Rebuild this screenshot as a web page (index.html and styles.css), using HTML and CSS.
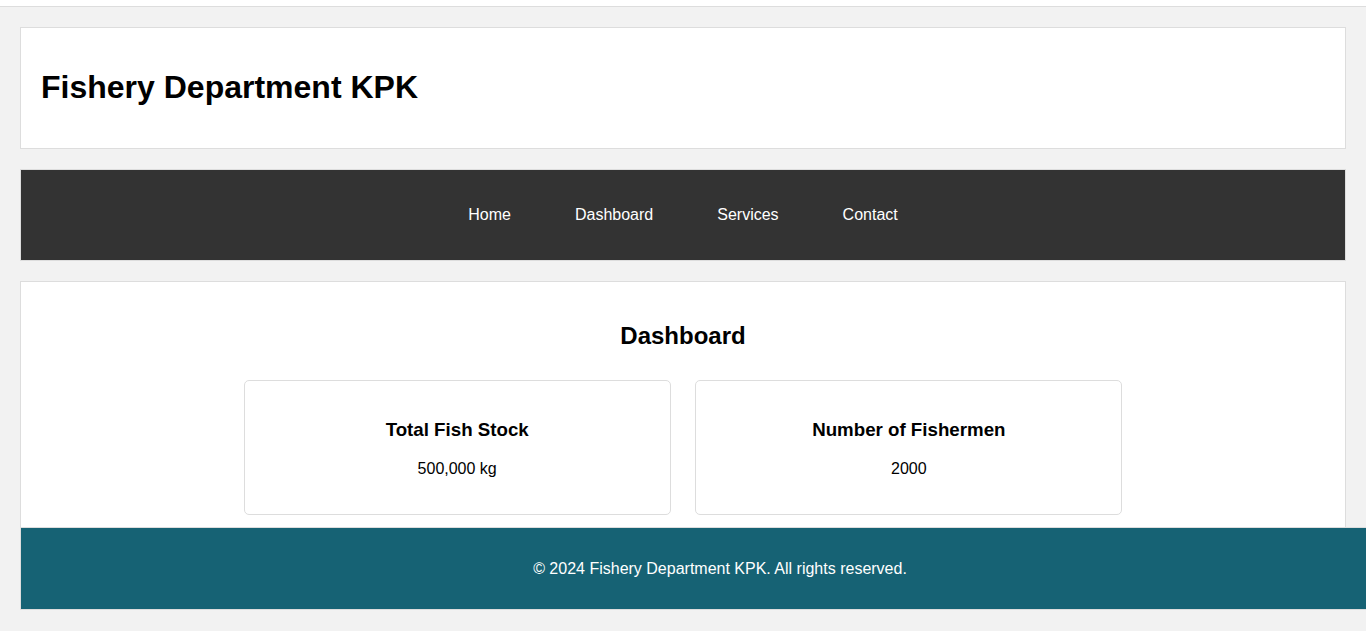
FILE: index.html
```html
<!DOCTYPE html>
<html lang="en">
<head>
<meta charset="utf-8">
<title>Fishery Department KPK</title>
<link rel="stylesheet" href="styles.css">
</head>
<body>
<header class="site-header">
  <h1>Fishery Department KPK</h1>
</header>
<nav class="site-nav">
  <ul>
    <li><a href="#">Home</a></li>
    <li><a href="#">Dashboard</a></li>
    <li><a href="#">Services</a></li>
    <li><a href="#">Contact</a></li>
  </ul>
</nav>
<main class="dashboard">
  <h2>Dashboard</h2>
  <div class="cards"><div class="card">
      <h3>Total Fish Stock</h3>
      <p>500,000 kg</p>
    </div> <div class="card">
      <h3>Number of Fishermen</h3>
      <p>2000</p>
    </div></div>
</main>
<footer class="site-footer">© 2024 Fishery Department KPK. All rights reserved.</footer>
</body>
</html>
```
FILE: styles.css
```css
html {
  background: #ffffff;
}
body {
  margin: 6px 0 0 0;
  padding: 20px;
  min-height: calc(100vh - 7px);
  box-sizing: border-box;
  border-top: 1px solid #dddddd;
  background: #f2f2f2;
  font-family: "Liberation Sans", Arial, sans-serif;
  font-size: 16px;
  color: #000;
}
.site-header {
  background: #fff;
  border: 1px solid #dddddd;
  padding: 0 20px;
  margin-bottom: 20px;
}
.site-header h1 {
  font-size: 32px;
  margin: 41px 0 42px;
  line-height: 37px;
}
.site-nav {
  background: #333333;
  border: 1px solid #dddddd;
  padding: 20px;
  margin-bottom: 20px;
}
.site-nav ul {
  list-style: none;
  margin: 16px 0;
  padding: 0;
  display: flex;
  justify-content: center;
  gap: 64px;
  line-height: 18px;
}
.site-nav a {
  color: #ffffff;
  text-decoration: none;
}
.dashboard {
  background: #fff;
  border: 1px solid #dddddd;
  padding: 20px;
  text-align: center;
}
.dashboard h2 {
  font-size: 24px;
  margin: 20px 0;
  line-height: 28px;
}
.card {
  display: inline-block;
  vertical-align: top;
  width: 30%;
  margin: 10px;
  padding: 20px;
  border: 1px solid #dddddd;
  border-radius: 5px;
  background: #fff;
}
.card h3 {
  font-size: 18.72px;
  margin: 18px 0 19px;
  line-height: 22px;
}
.card p {
  margin: 16px 0 15.5px;
  line-height: 18px;
}
.site-footer {
  position: fixed;
  left: 20px;
  bottom: 22px;
  width: 100%;
  padding: 31px 16px;
  background: #166274;
  border: 1px solid #dddddd;
  color: #ffffff;
  text-align: center;
  line-height: 19px;
}
```
